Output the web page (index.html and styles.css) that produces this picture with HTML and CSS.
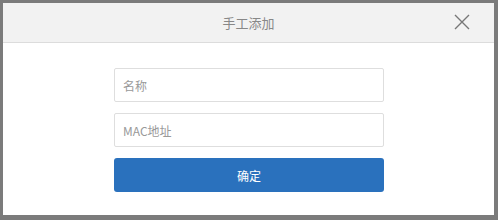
FILE: index.html
```html
<!DOCTYPE html>
<html lang="zh-CN">
<head>
    <meta charset="UTF-8">
    <title>手工添加</title>
    <link rel="stylesheet" href="styles.css">
</head>
<body>
    <!-- 手工添加弹框 -->
    <div class="modal">
        <div class="modal-header">
            <span class="modal-title">手工添加</span>
            <button class="close-btn" aria-label="关闭">
                <svg width="16" height="16" viewBox="0 0 16 16">
                    <path d="M1 1 L15 15 M15 1 L1 15" stroke="#777" stroke-width="1.4" fill="none"/>
                </svg>
            </button>
        </div>
        <div class="modal-body">
            <input type="text" class="field" placeholder="名称">
            <input type="text" class="field" placeholder="MAC地址">
            <button class="submit-btn">确定</button>
        </div>
    </div>
</body>
</html>
```

FILE: styles.css
```css
body {
    margin: 0;
    padding: 3px 4px 5px 3px;
    background: #7b7b7b;
    font-family: 'Noto Sans CJK SC', 'Microsoft YaHei', sans-serif;
    height: 220px;
    box-sizing: border-box;
}

.modal {
    background: #fff;
    height: 212px;
    display: flex;
    flex-direction: column;
}

.modal-header {
    position: relative;
    height: 39px;
    background: #f2f2f2;
    border-bottom: 1px solid #dcdcdc;
    display: flex;
    align-items: center;
    justify-content: center;
}

.modal-title {
    font-size: 13px;
    color: #888;
}

.close-btn {
    position: absolute;
    right: 24px;
    top: 11px;
    padding: 0;
    border: none;
    background: none;
    width: 16px;
    height: 16px;
    cursor: pointer;
}

.close-btn svg {
    display: block;
}

.modal-body {
    display: flex;
    flex-direction: column;
    align-items: center;
    gap: 11px;
    padding-top: 25px;
}

.field {
    width: 270px;
    height: 34px;
    box-sizing: border-box;
    border: 1px solid #dedede;
    border-radius: 2px;
    padding: 0 8px;
    font-size: 12px;
    font-family: inherit;
    color: #333;
    margin: 0;
    margin-left: 1px;
    outline: none;
}

.field::placeholder {
    color: #999;
}

.submit-btn {
    width: 270px;
    height: 34px;
    margin-left: 1px;
    border: none;
    border-radius: 3px;
    background: #2a71bd;
    color: #fff;
    font-size: 12px;
    font-family: inherit;
    cursor: pointer;
}
```
